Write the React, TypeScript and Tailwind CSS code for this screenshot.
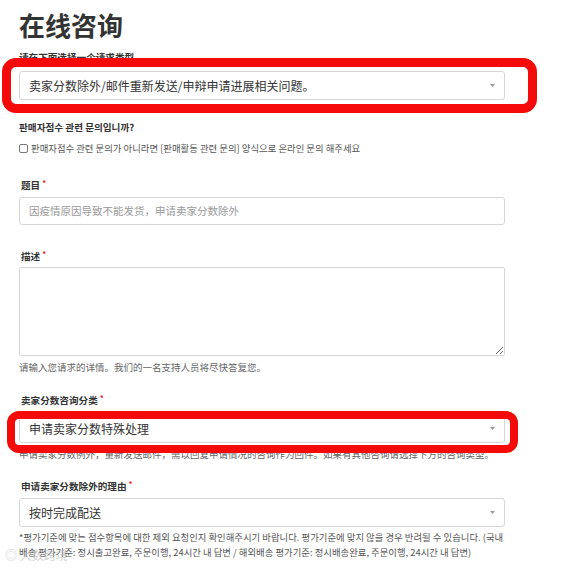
import React from "react";

const Arrow = () => (
  <svg width="5" height="3" viewBox="0 0 5 3" className="shrink-0">
    <path d="M0 0 L5 0 L2.5 3 Z" fill="#9a9a9a" />
  </svg>
);

const Select = ({ text }: { text: string }) => (
  <div className="flex h-[29px] w-[486px] items-center justify-between rounded-[3px] border border-[#d6d6d6] bg-white pl-[9px] pr-[9px]">
    <span className="text-[12px] leading-[16px] text-[#333]">{text}</span>
    <Arrow />
  </div>
);

const Label = ({ text, className = "" }: { text: string; className?: string }) => (
  <div className={`flex items-start pl-[2px] text-[9.6px] font-bold leading-[14px] text-[#333] ${className}`}>
    {text}
    <span className="ml-[2px] text-[8px] leading-[10px] text-[#e0282e]">*</span>
  </div>
);

export default function App() {
  return (
    <div className="relative h-[570px] w-[572px] overflow-hidden bg-white font-['Noto_Sans_CJK_SC','Noto_Sans_CJK_KR',sans-serif] text-[#333]">
      <div className="flex flex-col pl-[19px] pt-[5px]">
        <h1 className="text-[26px] font-bold leading-[40px] text-[#333]">在线咨询</h1>
        <div className="mt-[5px] text-[9.6px] font-bold leading-[14px]">请在下面选择一个请求类型</div>
        <div className="mt-[7px]">
          <Select text="卖家分数除外/邮件重新发送/申辩申请进展相关问题。" />
        </div>

        <div className="mt-[20px] font-['Noto_Sans_CJK_KR',sans-serif] text-[9.6px] font-bold leading-[14px]">
          판매자점수 관련 문의입니까?
        </div>
        <div className="mt-[6px] flex h-[16px] items-center gap-[3px] font-['Noto_Sans_CJK_KR',sans-serif] text-[9.4px] text-[#555]">
          <span className="inline-block h-[9px] w-[9px] rounded-[2px] border border-[#777] bg-white" />
          <span>판매자점수 관련 문의가 아니라면 [판매활동 관련 문의] 양식으로 온라인 문의 해주세요</span>
        </div>

        <Label text="题目" className="mt-[22px]" />
        <div className="mt-[5px] flex h-[28px] w-[486px] items-center rounded-[3px] border border-[#d6d6d6] pl-[9px] text-[10.5px] text-[#9a9a9a]">
          因疫情原因导致不能发货，申请卖家分数除外
        </div>

        <Label text="描述" className="mt-[24px]" />
        <textarea
          className="mt-[4px] block h-[89px] w-[486px] resize-y rounded-[2px] border border-[#d6d6d6] bg-white outline-none"
          defaultValue=""
        />
        <div className="mt-[4px] text-[9.5px] leading-[14px] text-[#666]">
          请输入您请求的详情。我们的一名支持人员将尽快答复您。
        </div>

        <Label text="卖家分数咨询分类" className="mt-[19px]" />
        <div className="mt-[7px]">
          <Select text="申请卖家分数特殊处理" />
        </div>
        <div className="mt-[4px] text-[9.5px] leading-[14px] text-[#666]">
          申请卖家分数例外，重新发送邮件，需以回复申请情况的咨询作为回件。如果有其他咨询请选择下方的咨询类型。
        </div>

        <Label text="申请卖家分数除外的理由" className="mt-[18px]" />
        <div className="mt-[5px]">
          <Select text="按时完成配送" />
        </div>
        <div className="mt-[3px] w-[500px] font-['Noto_Sans_CJK_KR',sans-serif] text-[9.4px] leading-[15px] text-[#555]">
          *평가기준에 맞는 점수항목에 대한 제외 요청인지 확인해주시기 바랍니다. 평가기준에 맞지 않을 경우 반려될 수 있습니다. (국내
          <br />
          배송 평가기준: 정시출고완료, 주문이행, 24시간 내 답변 / 해외배송 평가기준: 정시배송완료, 주문이행, 24시간 내 답변)
        </div>
      </div>

      {/* watermark */}
      <div className="pointer-events-none absolute left-[5px] top-[547px] text-[12px] leading-[16px] text-[#b5b5b5] opacity-60">
        ◎ 大数跨境
      </div>

      {/* red highlight boxes */}
      <div className="pointer-events-none absolute left-[2px] top-[58px] h-[55px] w-[535px] rounded-[14px] border-[9px] border-[#f50a0a]" />
      <div className="pointer-events-none absolute left-[7px] top-[411px] h-[42px] w-[511px] rounded-[12px] border-[8px] border-[#f50a0a]" />
    </div>
  );
}
